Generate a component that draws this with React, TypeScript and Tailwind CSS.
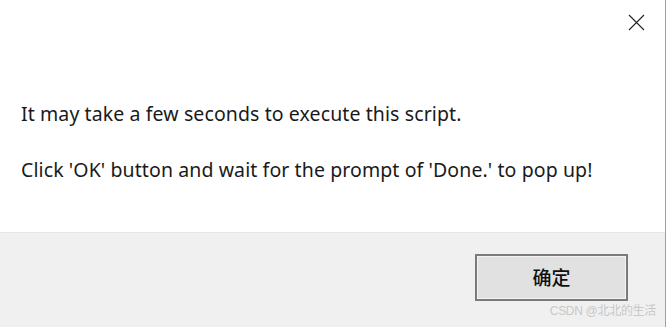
export default function App() {
  return (
    <div className="w-[666px] h-[327px] flex flex-col bg-white border-r border-[#a0a0a0] font-['Noto_Sans','Noto_Sans_CJK_SC',sans-serif] text-[#1a1a1a] overflow-hidden">
      <div className="h-[232px] flex flex-col">
        <div className="flex justify-end pt-[14px] pr-[20px]">
          <button className="w-[17px] h-[17px] flex items-center justify-center">
            <svg width="17" height="17" viewBox="0 0 17 17">
              <path d="M1 1 L16 16 M16 1 L1 16" stroke="#222" strokeWidth="1.1" fill="none" />
            </svg>
          </button>
        </div>
        <div className="pl-[21px] pt-[55px] text-[19.5px] leading-[56px] tracking-[0.1px]">
          <p>It may take a few seconds to execute this script.</p>
          <p>Click 'OK' button and wait for the prompt of 'Done.' to pop up!</p>
        </div>
      </div>
      <div className="flex-1 bg-[#f0f0f0] border-t border-[#e6e6e6] flex flex-col items-end pr-[37px] pt-[21px]">
        <button className="w-[153px] h-[47px] bg-[#e1e1e1] border-2 border-[#7a7a7a] shadow-[inset_0_0_0_1px_#f4f4f4] text-[19px] font-medium text-[#111] font-['Noto_Sans_CJK_SC',sans-serif]">
          确定
        </button>
        <div className="mt-[1px] -mr-[28px] text-[12px] text-[#c8c8c8] font-['Liberation_Sans','Noto_Sans_CJK_SC',sans-serif] tracking-[-0.3px]">
          CSDN @北北的生活
        </div>
      </div>
    </div>
  );
}
